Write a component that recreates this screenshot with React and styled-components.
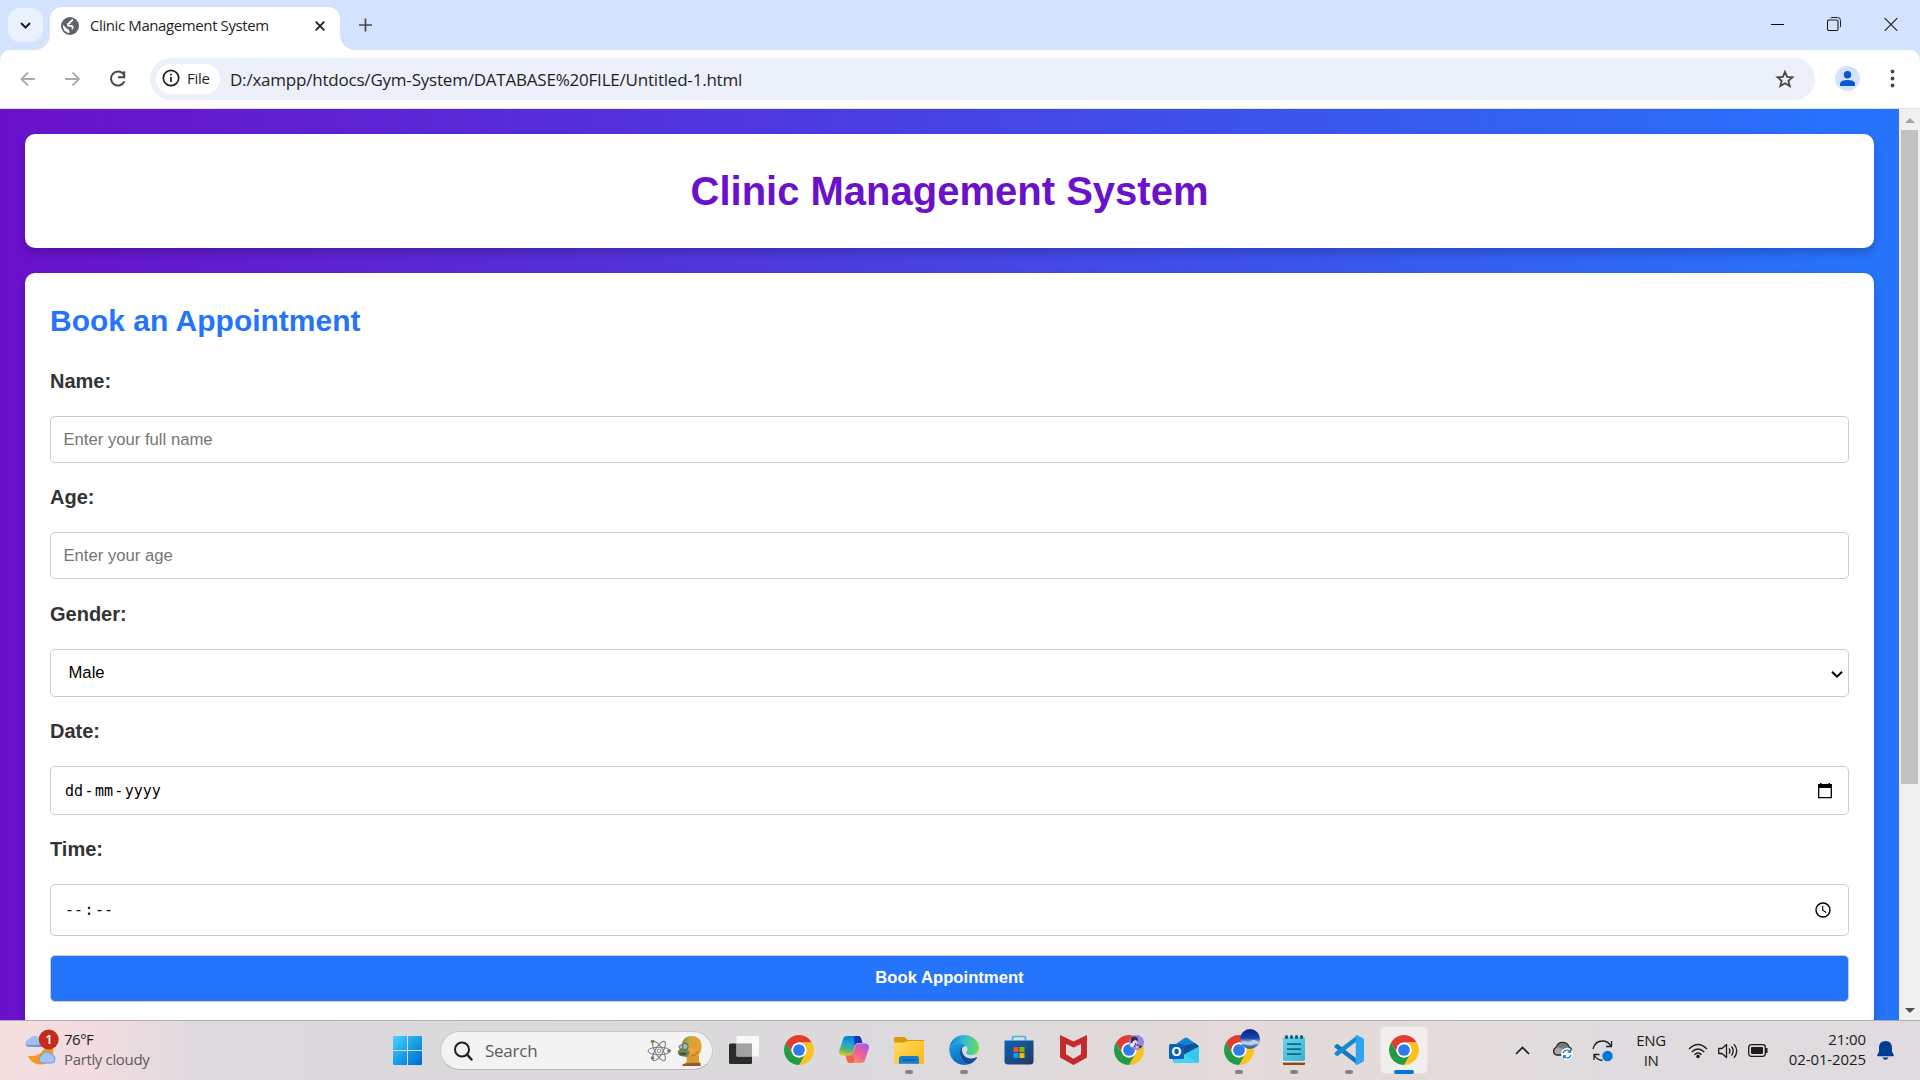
import React from "react";
import styled, { createGlobalStyle } from "styled-components";

const ui = `"Open Sans", "Noto Sans", sans-serif`;
const page = `"Liberation Sans", Arial, sans-serif`;

const Global = createGlobalStyle`
  *, *::before, *::after { box-sizing: border-box; }
  body { margin: 0; overflow: hidden; }
  svg { display: block; flex: none; }
`;

const Screen = styled.div`
  width: 1920px;
  height: 1080px;
  overflow: hidden;
  display: flex;
  flex-direction: column;
  font-family: ${ui};
  background: #fff;
`;

/* ---------- browser chrome ---------- */

const TabStrip = styled.header`
  flex: none;
  height: 50px;
  padding-left: 8px;
  display: flex;
  align-items: flex-start;
  background: #d3e3fd;
`;

const TabSearch = styled.button`
  width: 35px;
  height: 34px;
  margin: 8px 7px 0 0;
  padding: 0;
  border: 0;
  border-radius: 12px;
  background: #e9f0fe;
  display: grid;
  place-items: center;
`;

const Tab = styled.div`
  position: relative;
  width: 290px;
  height: 43px;
  margin-top: 7px;
  padding: 0 15px 6px 11px;
  display: flex;
  align-items: center;
  background: #fff;
  border-radius: 12px 12px 0 0;
  &::before, &::after {
    content: "";
    position: absolute;
    bottom: 0;
    width: 15px;
    height: 15px;
  }
  &::before { left: -15px; background: radial-gradient(circle at 0 0, transparent 14.5px, #fff 15.2px); }
  &::after { right: -15px; background: radial-gradient(circle at 100% 0, transparent 14.5px, #fff 15.2px); }
`;

const TabTitle = styled.span`
  flex: 1;
  margin-left: 11px;
  padding-bottom: 2px;
  font-size: 15px;
  line-height: 20px;
  letter-spacing: -0.4px;
  color: #1f1f1f;
  white-space: nowrap;
`;

const NewTab = styled.div`
  margin: 18px 0 0 19px;
`;

const WindowControls = styled.div`
  margin-left: auto;
  padding: 17px 22px 0 0;
  display: flex;
  gap: 43px;
`;

const ToolbarBack = styled.div`
  flex: none;
  height: 59px;
  background: #d3e3fd;
`;

const Toolbar = styled.nav`
  height: 59px;
  padding: 0 20px 1px 17px;
  display: flex;
  align-items: center;
  background: #fff;
  border-bottom: 1px solid #dde1e6;
  border-radius: 10px 10px 0 0;
`;

const NavButtons = styled.div`
  width: 133px;
  display: flex;
  gap: 21px;
`;

const Omnibox = styled.div`
  width: 1665px;
  height: 42px;
  padding: 0 18px 0 6px;
  display: flex;
  align-items: center;
  background: #ebf0fa;
  border-radius: 21px;
`;

const Chip = styled.span`
  width: 64px;
  height: 30px;
  padding: 0 0 1px 6px;
  display: flex;
  align-items: center;
  gap: 7px;
  border-radius: 15px;
  background: #fff;
  font-size: 15px;
  letter-spacing: -0.3px;
  color: #1f1f1f;
`;

const Url = styled.span`
  flex: 1;
  margin-left: 10px;
  padding-top: 1px;
  font-size: 17px;
  letter-spacing: -0.21px;
  color: #1f1f1f;
`;

const Avatar = styled.span`
  margin: 0 30px 0 20px;
  display: block;
`;

/* ---------- web page ---------- */

const Viewport = styled.div`
  flex: none;
  height: 911px;
  display: flex;
  overflow: hidden;
`;

const Page = styled.main`
  width: 1899px;
  height: 943px;
  padding: 25px;
  display: flex;
  flex-direction: column;
  gap: 25px;
  background: linear-gradient(to right, #6a11cb, #2575fc);
  font-family: ${page};
`;

const Card = styled.section`
  flex: none;
  padding: 25px;
  background: #fff;
  border-radius: 10px;
  box-shadow: 0 5px 10px rgba(0, 0, 0, 0.2);
`;

const PageTitle = styled.h1`
  margin: 0;
  font-size: 40px;
  line-height: 64px;
  text-align: center;
  color: #6a11cb;
`;

const SectionTitle = styled.h2`
  margin: 0 0 21px;
  font-size: 30px;
  line-height: 46px;
  color: #2575fc;
`;

const Field = styled.div`
  margin-bottom: ${(p) => p.$gap || 18}px;
`;

const Label = styled.label`
  display: block;
  margin-bottom: 19px;
  font-size: 20px;
  font-weight: 700;
  line-height: 32px;
  color: #333;
`;

const Input = styled.input`
  display: block;
  width: 100%;
  height: 47px;
  padding: 0 12.5px;
  border: 1px solid #ccc;
  border-radius: 5px;
  background: #fff;
  font: 16.67px ${page};
  &::placeholder { color: #757575; opacity: 1; }
`;

const Picker = styled.div`
  width: 100%;
  height: ${(p) => p.$height}px;
  padding: 0 ${(p) => p.$right}px 0 ${(p) => p.$left}px;
  display: flex;
  align-items: center;
  justify-content: space-between;
  border: 1px solid #ccc;
  border-radius: 5px;
  background: #fff;
  color: #000;
  font: 16.67px ${page};
`;

const Arrow = styled.span`
  padding-top: 2px;
`;

const Segments = styled.span`
  display: flex;
  gap: ${(p) => p.$gap}px;
  font: 15px "DejaVu Sans Mono", monospace;
`;

const Submit = styled.button`
  display: block;
  width: 100%;
  height: 47px;
  padding: 0 0 1px;
  border: 1px solid #ccc;
  border-radius: 5px;
  background: #2575fc;
  color: #fff;
  font: 700 16.67px ${page};
`;

const Scrollbar = styled.div`
  width: 21px;
  padding: 9px 2px 7px;
  display: flex;
  flex-direction: column;
  align-items: center;
  background: #f0f0f0;
`;

const Thumb = styled.div`
  width: 17px;
  height: 654px;
  margin: 7px 0 auto;
  background: #c1c1c1;
`;

/* ---------- taskbar ---------- */

const Taskbar = styled.footer`
  flex: none;
  height: 60px;
  display: flex;
  align-items: center;
  border-top: 1px solid #afadb0;
  background: linear-gradient(to right, #f4dfe1 0, #f2dcdf 90px, #dedade 200px, #dbd9dc 500px, #dddadd 900px, #e3dad9 1220px, #e2dbda 1450px, #dfdbdf 1650px, #dfdbdf 100%);
`;

const Weather = styled.div`
  width: 380px;
  padding: 0 0 2px 23px;
  display: flex;
  gap: 5px;
`;

const Stack = styled.div`
  display: flex;
  flex-direction: column;
  width: ${(p) => p.$width || "auto"};
  align-items: ${(p) => p.$align || "flex-start"};
  padding-bottom: ${(p) => p.$lift || 0}px;
  font-size: 15px;
  line-height: 20px;
  letter-spacing: ${(p) => p.$spacing || 0}px;
  color: #1b1b1b;
  white-space: nowrap;
`;

const Muted = styled.span`
  color: #5d5a5d;
  letter-spacing: -0.35px;
`;

const AppCell = styled.div`
  position: relative;
  width: 55px;
  height: 59px;
  display: grid;
  place-items: center;
  padding-bottom: 1px;
`;

const ActiveTile = styled.div`
  width: 48px;
  height: 48px;
  display: grid;
  place-items: center;
  background: #f3eeee;
  border: 1px solid #e9e3e4;
  border-radius: 5px;
`;

const Indicator = styled.span`
  position: absolute;
  bottom: 6px;
  left: 50%;
  transform: translateX(-50%);
  width: ${(p) => (p.$active ? 20 : 8)}px;
  height: 4px;
  border-radius: 2px;
  background: ${(p) => (p.$active ? "#0078d4" : "#858285")};
`;

const SearchBox = styled.div`
  width: 273px;
  height: 39px;
  margin: 0 3.5px 0 5px;
  padding: 0 9px 0 12px;
  display: flex;
  align-items: center;
  border: 1px solid #cbc8cb;
  border-bottom-color: #b8b5b8;
  border-radius: 20px;
  background: #f4f3f4;
  font-size: 17px;
  letter-spacing: -0.25px;
  color: #5c5c5c;
`;

const SearchText = styled.span`
  flex: 1;
  margin-left: 12px;
`;

const Tray = styled.div`
  margin-left: auto;
  padding-right: 26px;
  display: flex;
  align-items: center;
`;

const TrayItem = styled.div`
  margin-right: ${(p) => p.$gap}px;
`;

/* ---------- icons ---------- */

const Svg = ({ w = 30, h = w, box, children }) => (
  <svg width={w} height={h} viewBox={box || `0 0 ${w} ${h}`} fill="none">{children}</svg>
);

const Globe = () => (
  <Svg w={18} box="0 0 18 18">
    <circle cx="9" cy="9" r="9" fill="#5f6368" />
    <path d="M2 7.800l3.800 3.700c.6.500.8.8 1.400.9.900.2 1.200.8 1.200 1.700v1.900C4.500 15.900 1.600 12.700 2 7.800z" fill="#fff" />
    <path d="M11.300 2c2.900 1 4.900 3.900 4.700 7.300l-2.300 1c-1 0-1.300-.4-1.500-1.400-.2-.8-.7-1.200-1.600-1.200H8.500c-1 0-1.400-.5-1.100-1.300.2-.5.6-.5 1-.5.8 0 1-.4 1-1 .1-1.100 2-1.100 1.900-2.900z" fill="#5f6368" />
    <path d="M11.200 2.300c.4 1.100-.3 1.700-1.100 2.100-.7.300-1.100.5-1.200 1.100 0 .7-.5 1-1.200 1-.8 0-.9.500-.9 1.200 0 .8.500 1.100 1.300 1.100h2.200c1 0 1.500.5 1.500 1.400 0 .9-.3 1.400-1.100 1.700" stroke="#fff" strokeWidth="1.800" />
  </Svg>
);

const Chrome = () => (
  <Svg w={30} box="2 2 44 44">
    <path d="M4.950 13A22 22 0 0 1 43.050 13L24 13A11 11 0 0 0 14.470 29.500Z" fill="#e33b2e" />
    <path d="M43.050 13A22 22 0 0 1 24 46L33.530 29.500A11 11 0 0 0 24 13Z" fill="#fcc31e" />
    <path d="M24 46A22 22 0 0 1 4.950 13L14.470 29.500A11 11 0 0 0 33.530 29.500Z" fill="#259a44" />
    <circle cx="24" cy="24" r="11" fill="#fff" />
    <circle cx="24" cy="24" r="8.600" fill="#2f7bea" />
  </Svg>
);

const ProfileChrome = () => (
  <Svg w={30}>
    <Chrome />
    <circle cx="22.500" cy="7.500" r="7.500" fill="#8d86ee" />
    <path d="M17 3c3-2.500 6-1.500 7 1l-1 4 2 3-4 1-4-4z" fill="#3a2e46" />
    <path d="M19 6l3-1 2 3-2 3-4-2z" fill="#e9d7e4" />
    <circle cx="18" cy="10" r="2" fill="#f5edf4" />
    <circle cx="23" cy="12" r="1.600" fill="#f3a9c9" />
    <path d="M21 8l2 1-2 1zM26 10l2 2-3 1z" fill="#14101a" />
  </Svg>
);

const SkyChrome = () => (
  <Svg w={42} h={42} box="-6 -6 42 42">
    <Svg w={30} box="2 2 44 44">
      <path d="M4.950 13A22 22 0 0 1 43.050 13L24 13A11 11 0 0 0 14.470 29.500Z" fill="#e33b2e" />
      <path d="M43.050 13A22 22 0 0 1 24 46L33.530 29.500A11 11 0 0 0 24 13Z" fill="#fcc31e" />
      <path d="M24 46A22 22 0 0 1 4.950 13L14.470 29.500A11 11 0 0 0 33.530 29.500Z" fill="#259a44" />
      <circle cx="24" cy="24" r="11" fill="#fff" />
      <circle cx="24" cy="24" r="8.600" fill="#2f7bea" />
    </Svg>
    <defs>
      <linearGradient id="skyFill" x1="26" y1="-6" x2="26" y2="14" gradientUnits="userSpaceOnUse">
        <stop offset="0" stopColor="#0a2480" /><stop offset=".45" stopColor="#1743b0" />
        <stop offset=".62" stopColor="#7fa2cf" /><stop offset="1" stopColor="#2f5a93" />
      </linearGradient>
    </defs>
    <circle cx="26" cy="4" r="10" fill="url(#skyFill)" />
    <path d="M17 7.500q2.500-2.500 5-1t5-.5 5-.5 3 1l-.800 2.500q-3.500 0-6 1t-6-.3-4.600.3z" fill="#d3dfec" opacity=".8" />
  </Svg>
);

const Windows = () => (
  <Svg w={29}>
    <defs>
      <linearGradient id="win" x1="0" y1="0" x2="29" y2="29" gradientUnits="userSpaceOnUse">
        <stop offset="0" stopColor="#4fd2ff" /><stop offset=".5" stopColor="#189fe8" /><stop offset="1" stopColor="#0068cf" />
      </linearGradient>
    </defs>
    <path fill="url(#win)" d="M1 0h13v14H0V1q0-1 1-1zM15 0h13q1 0 1 1v13H15zM0 15h14v14H1q-1 0-1-1zM15 15h14v13q0 1-1 1H15z" />
  </Svg>
);

const Copilot = () => (
  <Svg w={30} h={28}>
    <defs>
      <linearGradient id="cpA" x1="10" y1="0" x2="6" y2="20" gradientUnits="userSpaceOnUse">
        <stop offset="0" stopColor="#0a79dc" /><stop offset=".4" stopColor="#1fa3d4" /><stop offset=".7" stopColor="#5bb56b" /><stop offset="1" stopColor="#e6cf1d" />
      </linearGradient>
      <linearGradient id="cpB" x1="26" y1="7" x2="12" y2="27" gradientUnits="userSpaceOnUse">
        <stop offset="0" stopColor="#a95af0" /><stop offset=".5" stopColor="#ee5f98" /><stop offset="1" stopColor="#ffa05c" />
      </linearGradient>
    </defs>
    <path d="M8 0h11q2.500 0 3.200 3l1.300 4h-4.500q-2 0-2.700 2.300L13.500 17q-.8 2.500-3 2.500H3q-4-1-2.700-5L4 3q1-3 4-3z" fill="url(#cpA)" />
    <path d="M16 0h3q2.500 0 3.200 3l1.300 4H19q-2 0-2.700 2L15 5q0-3 1-5z" fill="#1733bf" />
    <path d="M22 27H11q-2.500 0-3.200-3l-1.200-4.500H11q2 0 2.700-2.200L16.500 10q.8-2.500 3-2.500H27q4 1 2.800 5L26 24q-1 3-4 3z" fill="url(#cpB)" />
    <path d="M14 27h-3q-2.500 0-3.200-3l-1.200-4.500H11q2 0 2.500-1.700L15.500 23q0 2-1.500 4z" fill="#f4664a" />
  </Svg>
);

const Folder = () => (
  <Svg w={30} h={27}>
    <defs><linearGradient id="fold" x1="0" y1="4" x2="28" y2="27" gradientUnits="userSpaceOnUse"><stop stopColor="#ffdc62" /><stop offset="1" stopColor="#fbb916" /></linearGradient></defs>
    <path d="M0 1.500Q0 0 1.500 0h8q1.200 0 2 .8L13.500 3H29q1 0 1 1v8H0z" fill="#dc9a08" />
    <path d="M0 5.500h10.500L13.500 4H30v22q0 .7-.7.700H.7Q0 26.700 0 26z" fill="url(#fold)" />
    <path d="M5 26.700v-5.500Q5 19 7.200 19h15.600q2.200 0 2.200 2.200v5.500z" fill="#127fd0" />
    <path d="M8.500 22.900h13" stroke="#0a4f91" strokeWidth="1.200" />
  </Svg>
);

const Edge = () => (
  <Svg w={30}>
    <defs>
      <linearGradient id="edA" x1="0" y1="10" x2="30" y2="12" gradientUnits="userSpaceOnUse"><stop stopColor="#0d83d8" /><stop offset=".5" stopColor="#32bdd2" /><stop offset="1" stopColor="#6ddd50" /></linearGradient>
      <linearGradient id="edB" x1="4" y1="8" x2="12" y2="30" gradientUnits="userSpaceOnUse"><stop stopColor="#1b9de2" /><stop offset="1" stopColor="#0868be" /></linearGradient>
    </defs>
    <path d="M.3 13.500C1 5.500 7 0 15 0s15 5.500 15 12.500c0 5-4 7.500-7.500 7.500-4 0-5.500-1.500-5.500-2.500 0-.7 1.500-1.500 1.500-3.500C18.500 10.500 15 8 11 8 6 8 1.500 10 .3 13.500z" fill="url(#edA)" />
    <path d="M.3 13.500C1.500 10 6 8 11 8c2.500 0 5 1.200 6 3-3.500.3-5.500 3-6 6.500-.5 5.500 3 10.500 8.500 11.800-1.500.5-3 .7-4.500.7C6.500 30-.3 22.500.3 13.500z" fill="url(#edB)" />
    <path d="M11 17.500c.2-2.900 1-4.800 2.500-5.900-2 4.400 1 11.900 8 11.900 2.500 0 4.500-.8 5.700-1.300.8-.2 1 .4.600 1-1.800 2.800-4.800 5.300-8.300 6.100C14 28 10.700 23 11 17.500z" fill="#104d9b" />
  </Svg>
);

const Store = () => (
  <Svg w={30} h={30}>
    <defs><linearGradient id="st" x1="4" y1="4" x2="24" y2="30" gradientUnits="userSpaceOnUse"><stop stopColor="#0b63b6" /><stop offset="1" stopColor="#243a68" /></linearGradient></defs>
    <path d="M8.500 5.500V3q0-1.500 1.500-1.500h10q1.500 0 1.500 1.500v2.500" stroke="#31bdee" strokeWidth="1.700" />
    <path d="M.5 5.500h29V26q0 3.500-3.500 3.500H4Q.5 29.500.5 26z" fill="url(#st)" />
    <path fill="#f25022" d="M9.500 12h5v5h-5z" /><path fill="#7fba00" d="M15.500 12h5v5h-5z" />
    <path fill="#00a4ef" d="M9.500 18h5v5h-5z" /><path fill="#ffb900" d="M15.500 18h5v5h-5z" />
  </Svg>
);

const McAfee = () => (
  <Svg w={28} h={30}>
    <path d="M0 0l13.500 6.500L27 0v22.500L13.500 30 0 22.500zM6 9v10.200l7.500 4.500 7.500-4.500V9l-7.500 3.600z" fill="#c42b2c" fillRule="evenodd" />
  </Svg>
);

const OutlookO = styled.text`
  font: 700 13px "Open Sans", sans-serif;
  fill: #fff;
`;

const Outlook = () => (
  <Svg w={30} h={27}>
    <path d="M4 9L15.500 1q1.500-1 3 0L30 9v14q0 3-3 3H7q-3 0-3-3z" fill="#1183d5" />
    <path d="M14 9l12-3 4 3.500-15 10z" fill="#124f9c" />
    <path d="M14 18l16-8.500V23q0 3-3 3H7q-2 0-2.500-2z" fill="#35c7ee" />
    <path d="M14 17l15 8.500-2 .5H7q-3 0-3-3z" fill="#45d3f2" />
    <rect x="0" y="7" width="15" height="15" rx="1.500" fill="#0c5fb5" />
    <OutlookO x="7.500" y="19.200" textAnchor="middle">O</OutlookO>
  </Svg>
);

const Notepad = () => (
  <Svg w={22} h={30}>
    <defs><linearGradient id="np" x1="0" y1="2" x2="22" y2="26" gradientUnits="userSpaceOnUse"><stop stopColor="#6bd5e8" /><stop offset="1" stopColor="#39b1d3" /></linearGradient></defs>
    <path d="M0 26h22v3q0 1-1 1H1q-1 0-1-1z" fill="#8e4a17" />
    <path d="M0 25h22v2.500H0z" fill="#f1efee" />
    <rect y="2" width="22" height="24" rx="1.500" fill="url(#np)" />
    <path d="M4 9.200h14M4 14.200h14M4 19.200h14" stroke="#08698f" strokeWidth="1.800" />
    <path d="M3.500 1.500v1M8.500 1.500v1M13.500 1.500v1M18.500 1.500v1" stroke="#0b6078" strokeWidth="3" strokeLinecap="round" />
  </Svg>
);

const VsCode = () => (
  <Svg w={30}>
    <path d="M.8 10.600l1.400-1.300q.9-.7 1.800 0L23 24v5.500L.8 12.400q-.8-.9 0-1.800z" fill="#1277bd" />
    <path d="M.8 19.400l1.400 1.300q.9.700 1.800 0L23 6V.5L.8 17.600q-.8.900 0 1.800z" fill="#168ad0" />
    <path d="M21.800.3q.7-.5 1.500-.1l5.600 2.700Q30 3.500 30 4.800v20.400q0 1.300-1.100 1.900l-5.600 2.700q-.8.400-1.500-.1z" fill="#2ea5ef" />
  </Svg>
);

const TaskView = () => (
  <Svg w={30} h={28}>
    <rect x="0" y="7.500" width="23" height="20.500" rx="1.500" fill="#2c2b2b" />
    <rect x="7.500" y="0" width="22.500" height="20.500" rx="1.500" fill="#fff" opacity=".84" />
    <path d="M7.500 7.500H23V20.500H7.500z" fill="#a3a3a3" />
  </Svg>
);

const Homer = () => (
  <Svg w={26} h={30}>
    <defs><linearGradient id="hm" x1="4" y1="8" x2="24" y2="12" gradientUnits="userSpaceOnUse"><stop stopColor="#7f8a5c" /><stop offset=".4" stopColor="#d3a23f" /><stop offset="1" stopColor="#e9a02c" /></linearGradient></defs>
    <path d="M9 19h13v6l2 3q-8 2-17 1l3-4z" fill="#d99a35" />
    <path d="M6 28q8-2 17-1l1 3H5z" fill="#925d27" />
    <path d="M4.500 10C5 4 8.500 0 14.500 0 21 0 25 4 24.500 11c-.2 5-2 8.500-6 9.500-5 .5-9-.5-10.500-3z" fill="url(#hm)" />
    <path d="M.8 15q3-3.500 8-2l4 3-2 4.500Q4 21.500 1 18z" fill="#7a8050" />
    <circle cx="8" cy="10.500" r="3.200" fill="#9fb9a4" stroke="#47645c" />
    <circle cx="4" cy="11" r="2" fill="#a9c4b8" stroke="#47645c" strokeWidth=".8" />
    <path d="M2 17q4-1 8 0l-2 2.500-5-.8z" fill="#355346" />
    <circle cx="15.500" cy="14" r="2.300" fill="#ffa426" />
    <path d="M14 20q6-.5 7-5" stroke="#a86520" />
  </Svg>
);

const Atom = () => (
  <Svg w={24} h={24}>
    <g stroke="#77797a" strokeWidth="1">
      <ellipse cx="12" cy="12" rx="11" ry="3.800" />
      <ellipse cx="12" cy="12" rx="11" ry="3.800" transform="rotate(60 12 12)" />
      <ellipse cx="12" cy="12" rx="11" ry="3.800" transform="rotate(120 12 12)" />
    </g>
    <circle cx="12" cy="12" r="1.800" stroke="#8b8b8b" />
    <circle cx="5.500" cy="2.500" r="1.800" fill="#987552" /><circle cx="22" cy="12" r="1.800" fill="#66776b" /><circle cx="5.500" cy="19" r="1.800" fill="#607c7c" />
  </Svg>
);

const BadgeCount = styled.text`
  font: 600 13px "Open Sans", sans-serif;
  fill: #fff;
`;

const WeatherIcon = () => (
  <Svg w={36} h={40}>
    <path d="M7 18a4 4 0 0 1-.5-8A5.500 5.500 0 0 1 16 9q3 0 3.500 3v6z" fill="#a0bff3" />
    <path d="M2.300 15.500q8 1.500 17-.5v3H7q-3.500 0-4.700-2.500z" fill="#6f92d8" />
    <path d="M5 27q12 1 16-7h9q2 14-12 15.500Q9 36 5 27z" fill="#f49a1c" />
    <path d="M19 34a4 4 0 0 1-.5-7.500A5.500 5.500 0 0 1 28 25q4 1 4 5t-3 4z" fill="#a3c4fb" stroke="#6b92dc" strokeWidth=".9" />
    <circle cx="25.700" cy="10.500" r="10" fill="#c42b1c" />
    <BadgeCount x="26" y="15.200" textAnchor="middle">1</BadgeCount>
  </Svg>
);

const Bell = () => (
  <Svg w={17} h={19}>
    <path d="M8.500 0C4.500 0 2 2.800 2 6.500v4L.3 14q-.5 1.300.8 1.300h14.800q1.300 0 .8-1.300L15 10.500v-4C15 2.800 12.500 0 8.500 0zM5.500 16.500q1 2.300 3 2.300t3-2.300z" fill="#003e92" />
  </Svg>
);

const apps = [
  { icon: <TaskView /> },
  { icon: <Chrome /> },
  { icon: <Copilot /> },
  { icon: <Folder />, running: true },
  { icon: <Edge />, running: true },
  { icon: <Store /> },
  { icon: <McAfee /> },
  { icon: <ProfileChrome /> },
  { icon: <Outlook /> },
  { icon: <SkyChrome />, running: true },
  { icon: <Notepad />, running: true },
  { icon: <VsCode />, running: true },
  { icon: <Chrome />, active: true },
];

function Browser() {
  return (
    <>
      <TabStrip>
        <TabSearch aria-label="Search tabs">
          <Svg w={11} h={7}><path d="M1 1l4.500 4.500L10 1" stroke="#1f1f1f" strokeWidth="2" /></Svg>
        </TabSearch>
        <Tab>
          <Globe />
          <TabTitle>Clinic Management System</TabTitle>
          <Svg w={10}><path d="M.7.7l8.600 8.600M9.300.7L.7 9.300" stroke="#1f1f1f" strokeWidth="1.800" /></Svg>
        </Tab>
        <NewTab><Svg w={13} h={14}><path d="M6.500.500v13M0 7h13" stroke="#474747" strokeWidth="1.700" /></Svg></NewTab>
        <WindowControls>
          <Svg w={14}><path d="M1 7.500h13" stroke="#000" /></Svg>
          <Svg w={14}><path d="M3.500 1q.5-.5 1-.5h6q3 0 3 3v6q0 .7-.6 1" stroke="#1a1a1a" /><rect x=".5" y="3" width="10.500" height="10.500" rx="1.500" stroke="#1a1a1a" strokeWidth="1.100" /></Svg>
          <Svg w={14}><path d="M.7 1.200l12.600 12.600M13.300 1.200L.7 13.800" stroke="#1a1a1a" strokeWidth="1.100" /></Svg>
        </WindowControls>
      </TabStrip>
      <ToolbarBack>
        <Toolbar>
          <NavButtons>
            <Svg w={24}><path d="M18 12H5M11 5.500L4.500 12l6.500 6.500" stroke="#ababab" strokeWidth="1.800" /></Svg>
            <Svg w={24}><path d="M3 12h13.500M10.500 5.500L17 12l-6.500 6.500" stroke="#ababab" strokeWidth="1.800" /></Svg>
            <Svg w={24}><path d="M16.500 7.200A7 7 0 1 0 17.400 14.400M17.200 4.300v6h-6.200" stroke="#474747" strokeWidth="2" /></Svg>
          </NavButtons>
          <Omnibox>
            <Chip>
              <Svg w={18}><circle cx="9" cy="9" r="7.700" stroke="#1f1f1f" strokeWidth="1.700" /><path d="M9 8v5M9 4.800v1.800" stroke="#1f1f1f" strokeWidth="1.700" /></Svg>
              File
            </Chip>
            <Url>D:/xampp/htdocs/Gym-System/DATABASE%20FILE/Untitled-1.html</Url>
            <Svg w={24}><path d="M12 4.800l2.100 5 5.400.5-4.100 3.500 1.300 5.300L12 16.300l-4.700 2.800 1.300-5.300-4.100-3.500 5.400-.5z" stroke="#474747" strokeWidth="1.800" /></Svg>
          </Omnibox>
          <Avatar>
            <Svg w={25}><circle cx="12.500" cy="12.500" r="12.500" fill="#d3e3fd" /><circle cx="12.500" cy="8.700" r="3.700" fill="#0b57d0" /><path d="M5 20v-2q0-4 7.500-4t7.500 4v2z" fill="#0b57d0" /></Svg>
          </Avatar>
          <Svg w={5} h={19}><circle cx="2.500" cy="2.500" r="1.900" fill="#474747" /><circle cx="2.500" cy="9.500" r="1.900" fill="#474747" /><circle cx="2.500" cy="16.500" r="1.900" fill="#474747" /></Svg>
        </Toolbar>
      </ToolbarBack>
    </>
  );
}

function WebPage() {
  return (
    <Viewport>
      <Page>
        <Card><PageTitle>Clinic Management System</PageTitle></Card>
        <Card>
          <SectionTitle>Book an Appointment</SectionTitle>
          <Field><Label htmlFor="name">Name:</Label><Input id="name" placeholder="Enter your full name" /></Field>
          <Field $gap={19}><Label htmlFor="age">Age:</Label><Input id="age" placeholder="Enter your age" /></Field>
          <Field>
            <Label>Gender:</Label>
            <Picker $height={48} $left={17.5} $right={5}>
              <span>Male</span>
              <Arrow><Svg w={12} h={7}><path d="M1 .800l5 4.900 5-4.900" stroke="#000" strokeWidth="2" /></Svg></Arrow>
            </Picker>
          </Field>
          <Field>
            <Label>Date:</Label>
            <Picker $height={49} $left={14} $right={15}>
              <Segments $gap={1.4}><span>dd</span><span>-</span><span>mm</span><span>-</span><span>yyyy</span></Segments>
              <Svg w={15} h={16}><path d="M.7 2.500v12.200h12.600V2.500z" stroke="#000" strokeWidth="1.300" /><path d="M0 1h14v4H0zM2 0h1.500v2H2zM10.500 0H12v2h-1.500z" fill="#000" /></Svg>
            </Picker>
          </Field>
          <Field $gap={19}>
            <Label>Time:</Label>
            <Picker $height={52} $left={14} $right={17}>
              <Segments $gap={1.5}><span>--</span><span>:</span><span>--</span></Segments>
              <Svg w={16}><circle cx="8" cy="8" r="7" stroke="#000" strokeWidth="1.400" /><path d="M7.700 3.800v4.500l3.500 2.200" stroke="#000" strokeWidth="1.100" /></Svg>
            </Picker>
          </Field>
          <Submit>Book Appointment</Submit>
        </Card>
      </Page>
      <Scrollbar>
        <Svg w={10} h={5}><path d="M0 5l5-5 5 5z" fill="#a3a3a3" /></Svg>
        <Thumb />
        <Svg w={10} h={5}><path d="M0 0l5 5 5-5z" fill="#505050" /></Svg>
      </Scrollbar>
    </Viewport>
  );
}

function WindowsBar() {
  return (
    <Taskbar>
      <Weather>
        <WeatherIcon />
        <Stack $spacing={-0.5} $lift={2}><span>76°F</span><Muted>Partly cloudy</Muted></Stack>
      </Weather>
      <AppCell><Windows /></AppCell>
      <SearchBox>
        <Svg w={20}><circle cx="9" cy="8.500" r="7" stroke="#202020" strokeWidth="2" /><path d="M14 13.500l4.500 5" stroke="#202020" strokeWidth="2.500" strokeLinecap="round" /></Svg>
        <SearchText>Search</SearchText>
        <Atom />
        <TrayItem $gap={6} />
        <Homer />
      </SearchBox>
      {apps.map((app, i) => (
        <AppCell key={i}>
          {app.active ? <ActiveTile>{app.icon}</ActiveTile> : app.icon}
          {(app.running || app.active) && <Indicator $active={app.active} />}
        </AppCell>
      ))}
      <Tray>
        <TrayItem $gap={22}><Svg w={15} h={9}><path d="M1 8l6.500-6.500L14 8" stroke="#1b1b1b" strokeWidth="1.700" /></Svg></TrayItem>
        <TrayItem $gap={19}>
          <Svg w={21} h={19}>
            <path d="M4.500 14A4 4 0 0 1 4 6.500Q6 1.500 10.500 1.500q5 0 6.500 4.500 3 1 2.500 4.500l-2 3.500z" fill="#aaa" stroke="#222" strokeWidth="1.300" />
            <path d="M4.500 6Q7 2 11 2q4 0 5.500 4L11 8z" fill="#777" />
            <circle cx="15" cy="13" r="6" fill="#fff" /><path d="M11 12q1-3 4-3 2 0 3.500 2M19 14q-1 3-4 3-2 0-3.500-2M18.500 8.500v2.700h-2.700M11.500 17.500v-2.700h2.700" stroke="#0a78cf" strokeWidth="1.200" />
          </Svg>
        </TrayItem>
        <TrayItem $gap={23}>
          <Svg w={21} h={22}><path d="M1 9q2-8 9.500-8Q16 1 19 6M19.500 1v5.500H14M2 20v-5.500h5.500M2 14.500Q4.500 20 10.500 20.500" stroke="#222" strokeWidth="1.300" /><circle cx="15.500" cy="16" r="5.200" fill="#0078d4" /></Svg>
        </TrayItem>
        <TrayItem $gap={22}><Stack $align="center" $width="30px" $spacing={-0.4} $lift={2}><span>ENG</span><span>IN</span></Stack></TrayItem>
        <TrayItem $gap={10}>
          <Svg w={20} h={16}><path d="M1 6q9-9 18 0M3.800 9q6.200-6 12.400 0M6.500 11.700q3.500-3.500 7 0" stroke="#1b1b1b" strokeWidth="1.400" /><circle cx="10" cy="13.500" r="1.800" fill="#1b1b1b" /></Svg>
        </TrayItem>
        <TrayItem $gap={10}>
          <Svg w={20} h={16}><path d="M.7 5.500H4L8.500 1.500v13L4 10.500H.7z" stroke="#1b1b1b" strokeWidth="1.300" strokeLinejoin="round" /><path d="M11 5.500q1.800 2.500 0 5M13.500 3.500q3.500 4.500 0 9M16 1.200q5.500 6.800 0 13.600" stroke="#1b1b1b" strokeWidth="1.300" /></Svg>
        </TrayItem>
        <TrayItem $gap={20}>
          <Svg w={20} h={13}><rect x=".7" y=".7" width="16.600" height="11.600" rx="2.500" stroke="#1b1b1b" strokeWidth="1.300" /><rect x="3" y="3" width="12" height="7" rx="1" fill="#1b1b1b" /><path d="M18.500 4v5" stroke="#1b1b1b" strokeWidth="2" /></Svg>
        </TrayItem>
        <TrayItem $gap={11}><Stack $align="flex-end" $width="78px" $spacing={-0.1} $lift={4}><span>21:00</span><span>02-01-2025</span></Stack></TrayItem>
        <Bell />
      </Tray>
    </Taskbar>
  );
}

export default function App() {
  return (
    <Screen>
      <Global />
      <Browser />
      <WebPage />
      <WindowsBar />
    </Screen>
  );
}
